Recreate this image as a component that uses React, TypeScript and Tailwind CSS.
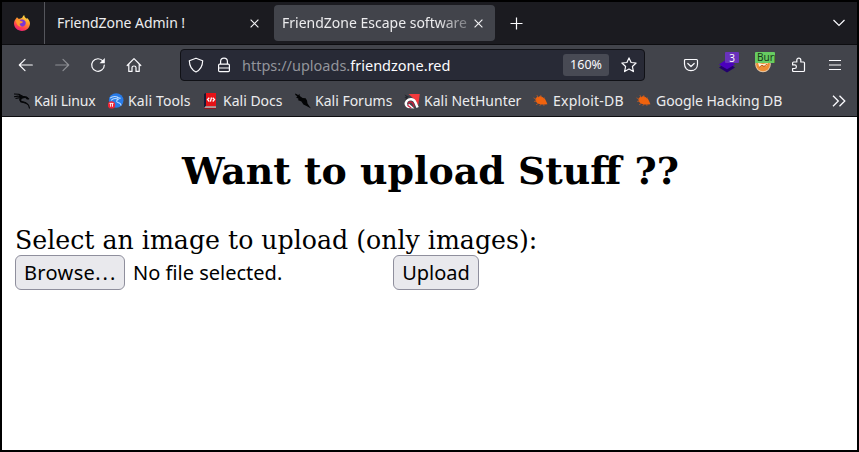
import type { ReactNode } from "react";

function Firefox() {
  return (
    <svg width="16" height="16" viewBox="0 0 16 16" className="shrink-0">
      <defs>
        <linearGradient id="fox" x1="0.8" y1="0" x2="0.3" y2="1">
          <stop offset="0" stopColor="#fff04a" />
          <stop offset="0.4" stopColor="#ff9a2b" />
          <stop offset="0.75" stopColor="#ff4050" />
          <stop offset="1" stopColor="#e3207c" />
        </linearGradient>
      </defs>
      <path fill="url(#fox)" d="M3 2.2L4.4 3.8L6 3.7L8.2 2.8C8.5 1.5 9.3.6 10.2 0C10.3 1.8 11.5 2.7 12.5 3.7L13 2.9C14.6 4 16 6.2 16 8.8C15.6 13 12.3 16 8 16C3.6 16 .1 12.7 0 8.6C0 6.7.7 5.1 1.7 4Z" />
      <path fill="#7a36d8" d="M5.2 5.3C7 4 10 4.2 11.3 6.2C12.6 8.6 10.9 11.4 8.2 11.5C6 11.5 4.6 9.8 4.8 8.2L7.4 8.2L9 6.9L6.7 6.5Z" />
      <path fill="#ff9a2b" d="M1.7 5.2L5.2 5L7.2 6.2L9 6.7L7.4 8.1L5.8 8.5C5.4 9.6 6.2 10.8 7.8 11.4C4 12.3 2.5 9 1.7 5.2Z" />
    </svg>
  );
}

function Icon({ size = 16, className = "", children }: { size?: number; className?: string; children: ReactNode }) {
  return (
    <svg width={size} height={size} viewBox={`0 0 ${size} ${size}`} fill="none" stroke="#fbfbfe" strokeWidth="1.2" strokeLinecap="round" strokeLinejoin="round" className={`shrink-0 ${className}`}>
      {children}
    </svg>
  );
}

function Close() {
  return (
    <svg width="9" height="9" viewBox="0 0 9 9" stroke="#f2f2f4" strokeWidth="1.15" className="shrink-0">
      <path d="M.6 .6L8.4 8.4M8.4 .6L.6 8.4" />
    </svg>
  );
}

function KaliDragon() {
  return (
    <svg width="17" height="16" viewBox="0 0 17 16" className="shrink-0">
      <path fill="none" stroke="#050608" strokeWidth="1.1" d="M0 1L5 1.2L8.5 3.2L12.5 4.2L15 6.2M0 3.8L4 3.1L7.5 4.3M1.5 5.5L6 4.6L8.2 5.2M7.5 4L6 6.3L6.8 8.6L11.5 9.8L14.5 12L15.6 15.5M12 4.4L13.5 6.5" />
      <path fill="#050608" d="M4 1L9 3.1L13 3.8L15 6L11 5L7.5 5.8L7.3 8L11.5 9L14.2 11.3L11 10.6L6.4 9.2L5.2 7L6.5 4.3Z" />
    </svg>
  );
}

function KaliTools() {
  return (
    <svg width="16" height="16" viewBox="0 0 16 16" className="shrink-0">
      <circle cx="8.2" cy="7.5" r="7.3" fill="#287be8" />
      <path fill="none" stroke="#b9dcff" strokeWidth="1.1" d="M2 5.2C5 2.6 9 3.2 11.3 5.4M3 7.3C5.5 5 8 5 10.2 6.6C8 7.3 8.2 9.4 10.5 9.8C12 10.2 13 11 13 12.6M9 4.6L12.7 5.3" />
      <circle cx="3.5" cy="11.9" r="3.7" fill="#ed2537" />
      <path d="M1.5 10.4H5.5M2.6 10.5V13.7M4.5 10.5V13.7" stroke="#fff" strokeWidth=".9" />
    </svg>
  );
}

function KaliDocs() {
  return (
    <svg width="13" height="16" viewBox="0 0 13 16" className="shrink-0">
      <path fill="#e41217" d="M2 0H12V13.2H2Z" />
      <path fill="#161a36" d="M0 1L2 0V13.2L0 15Z" />
      <path fill="#efe0dc" d="M1.3 13.6H12V14.8H.3Z" />
      <path fill="#a00c14" d="M.3 14.8H12V15.8H.3Z" />
      <path fill="none" stroke="#fff" strokeWidth="1.3" d="M5.3 4.7L3.5 6.6L5.3 8.5M8.7 4.7L10.5 6.6L8.7 8.5M7.5 4.5L6.4 8.7" />
    </svg>
  );
}

function KaliForums() {
  return (
    <svg width="16" height="16" viewBox="0 0 16 16" className="shrink-0">
      <path fill="#030405" d="M0 .6L2 1.3L3.2 2.3L4.4 .8L4.8 3L7.6 5L10.6 5.2L12 7.6L12.5 10.6L16 15.6L11.5 13L8.4 11.4L6.4 8.6L2.8 7L3.8 6L1 4.2L2.4 3.5L.4 2Z" />
    </svg>
  );
}

function NetHunter() {
  return (
    <svg width="16" height="16" viewBox="0 0 16 16" className="shrink-0">
      <path fill="#f43a3d" d="M4.5 1H15.8L14.2 12.5L10 6Z" />
      <path fill="#24272e" d="M.5 1.5L5.4 4L3 4.6L5.8 5.6L1 8L2 5.5L.3 4.4L2 4Z" />
      <path fill="none" stroke="#fff" strokeWidth="2.5" strokeLinejoin="round" d="M13.6 14.4L11.4 9.6C10 5.8 5.4 5.2 2.8 8C.9 10.5 1.9 13.4 4.6 14" />
      <path fill="none" stroke="#c21f3c" strokeWidth="1.5" d="M9.9 13.6L9.3 11C8.3 8.6 5.2 8.4 4.2 10.6" />
      <path fill="none" stroke="#fff" strokeWidth="1.4" d="M4.6 11.4L8.4 14.6L4 14.4" />
      <path fill="none" stroke="#db2544" strokeWidth="1.2" d="M3.4 12.2L7.2 15" />
    </svg>
  );
}

function ExploitBug() {
  return (
    <svg width="15" height="15" viewBox="0 0 15 15" className="shrink-0">
      <path fill="#f0630e" d="M2.4 6.2L4.2 3.6L5.6 4.1L7 3L9.8 4.2L12 6L13.4 8.8L14.4 11.2L11.6 11.4L8 11.5L4.6 10.5L2.8 8.6Z" />
      <path fill="none" stroke="#c95a20" strokeWidth=".7" d="M.5 4.8L3.5 6.5M1 8.4L3.8 8.2M3.8 2L5.5 5M7.6 2L8.5 4.5M12 4.6L10.5 6M3 11.8L6 10.2M6.6 13L8 11M11 13L10.6 11" />
    </svg>
  );
}

function Bookmark({ icon, label, box, spacing }: { icon: ReactNode; label: string; box: string; spacing: string }) {
  return (
    <div className={`flex shrink-0 items-center ${box}`}>
      <span className="flex w-[20px] shrink-0 items-center">{icon}</span>
      <span className={`whitespace-nowrap ${spacing}`}>{label}</span>
    </div>
  );
}

const bookmarks = [
  { icon: <KaliDragon />, label: "Kali Linux", box: "w-[94px]", spacing: "tracking-[-0.15px]" },
  { icon: <KaliTools />, label: "Kali Tools", box: "w-[96px]", spacing: "tracking-[0.12px]" },
  { icon: <KaliDocs />, label: "Kali Docs", box: "w-[91px]", spacing: "-ml-px" },
  { icon: <KaliForums />, label: "Kali Forums", box: "w-[109px]", spacing: "tracking-[0px]" },
  { icon: <NetHunter />, label: "Kali NetHunter", box: "w-[129px]", spacing: "tracking-[0px]" },
  { icon: <ExploitBug />, label: "Exploit-DB", box: "w-[103px]", spacing: "tracking-[0.25px]" },
  { icon: <ExploitBug />, label: "Google Hacking DB", box: "w-[150px]", spacing: "tracking-[-0.05px]" },
];

function TabBar() {
  return (
    <div className="flex h-[43px] items-center border-b border-[#0d0d10] bg-[#1b1b20] pl-[12px] pr-[12px]">
      <Firefox />
      <div className="ml-[14px] h-[42px] w-px bg-[#55565c]" />
      <div className="ml-[12px] flex w-[202px] items-center justify-between">
        <span className="whitespace-nowrap tracking-[-0.04px]">FriendZone Admin !</span>
        <Close />
      </div>
      <div className="ml-[15px] flex h-9 w-[221px] items-center rounded-[4px] bg-[#42444b] pl-[8px]">
        <span className="w-[187px] overflow-hidden whitespace-nowrap [mask-image:linear-gradient(to_right,#000_83%,transparent_107%)]">FriendZone Escape software</span>
        <span className="ml-[5px] flex"><Close /></span>
      </div>
      <svg width="13" height="13" viewBox="0 0 13 13" stroke="#fbfbfe" strokeWidth="1.2" className="ml-[15px]">
        <path d="M6.5 .5V12.5M.5 6.5H12.5" />
      </svg>
      <svg width="12" height="8" viewBox="0 0 12 8" fill="none" stroke="#fbfbfe" strokeWidth="1.2" className="ml-auto">
        <path d="M.5 1L6 6.5L11.5 1" />
      </svg>
    </div>
  );
}

function NavBar() {
  return (
    <div className="flex h-10 items-center pr-[13px] pl-[16px]">
      <Icon><path d="M14.3 8H1.3M7 2.3L1.3 8L7 13.7" /></Icon>
      <Icon className="ml-[20px] opacity-40"><path d="M1.7 8H14.5M9 2.3L14.7 8L9 13.7" /></Icon>
      <Icon className="ml-[20px]">
        <path d="M13 4.2A6.3 6.3 0 1 0 14.3 8" />
        <path fill="#fbfbfe" stroke="none" d="M14.8 1V6.2H9.6Z" />
      </Icon>
      <Icon className="ml-[20px]"><path d="M1.2 8.5L8 1.7L14.8 8.5M2.8 7V14.4H6V10.5Q6 9 8 9Q10 9 10 10.5V14.4H13.2V7" /></Icon>
      <div className="ml-[38px] flex h-8 w-[465px] items-center rounded-[4px] border border-[#101116] bg-[#282a36] pr-[7px] pl-[7px] text-[#fbfbfe]">
        <Icon><path d="M8 1.2L14.7 3.8C14.5 9 13 12.7 8 15C3 12.7 1.5 9 1.3 3.8Z" /></Icon>
        <Icon className="ml-[12px]"><path d="M4.6 7V4.5A3.4 3.4 0 0 1 11.4 4.5V7M3.7 7.2H12.3Q13.4 7.2 13.4 8.3V13.5Q13.4 14.7 12.3 14.7H3.7Q2.6 14.7 2.6 13.5V8.3Q2.6 7.2 3.7 7.2ZM2.6 11H13.4" /></Icon>
        <span className="ml-[10px] whitespace-nowrap text-[14.5px]"><span className="text-[#93949b]">https://uploads.</span>friendzone.red</span>
        <span className="ml-auto flex h-[22px] w-[46px] items-center justify-center rounded-[3px] bg-[#484a54] text-[12.5px]">160%</span>
        <Icon className="ml-[12px]"><path d="M8 .9L10.1 5.5L15.1 6L11.4 9.5L12.4 14.6L8 12.1L3.6 14.6L4.6 9.5L.9 6L5.9 5.5Z" /></Icon>
      </div>
      <Icon className="ml-[38px]"><path d="M2.5 2.5H13.5Q14.5 2.5 14.5 3.5V7C14.5 11 11.8 13.6 8 13.6S1.5 11 1.5 7V3.5Q1.5 2.5 2.5 2.5ZM4.8 6.5L8 9.5L11.2 6.5" /></Icon>
      <div className="relative ml-[20px] h-5 w-4 shrink-0">
        <svg width="16" height="20" viewBox="0 0 16 20">
          <path fill="#23006d" d="M0 12.5L8 7L16 12.5L8 17.5Z" />
          <path fill="#4b00bd" d="M0 9.5L8 4L16 9.5L8 14.2Z" />
        </svg>
        <span className="absolute top-[-3px] left-[6px] flex h-[11px] w-[14px] items-center justify-center rounded-[1px] bg-[#6932bb] text-[10px] leading-none text-white">3</span>
      </div>
      <div className="relative ml-[20px] h-5 w-4 shrink-0">
        <svg width="16" height="20" viewBox="0 0 16 20">
          <circle cx="8" cy="9.4" r="7.8" fill="#e7c8a5" />
          <circle cx="8" cy="9.4" r="6.8" fill="#ee8d33" />
          <path d="M3 8L8 9L13 8L11 11L7 10.8L4.5 12.5Z" fill="#fff1d9" />
          <path d="M4 12.5L7 10.2L9 11.5L12 9" fill="none" stroke="#bd5b20" strokeWidth="1" />
        </svg>
        <span className="absolute top-[-3px] left-0 h-[11px] w-5 overflow-hidden rounded-[1px] bg-[#67cc62] pl-[2px] text-[10px] leading-[11px] text-[#183817]">Burp</span>
      </div>
      <Icon className="ml-[20px]"><path d="M2.6 14.5Q1.6 14.5 1.6 13.5V11.5H3.6A1.8 1.8 0 0 0 3.6 7.9H1.6V6Q1.6 5 2.6 5H5.8V3.2A2 2 0 0 1 9.8 3.2V5H12.5Q13.5 5 13.5 6V13.5Q13.5 14.5 12.5 14.5Z" /></Icon>
      <Icon className="ml-[20px]"><path strokeLinecap="butt" d="M2 3.5H14M2 8H14M2 12.5H14" /></Icon>
    </div>
  );
}

export default function App() {
  return (
    <main className="flex h-[452px] w-[859px] flex-col overflow-hidden border-2 border-black bg-white font-['Noto_Sans',sans-serif] text-[14px] leading-5 text-[#ececee]">
      <TabBar />
      <div className="h-[72px] border-b border-[#0d0d10] bg-[#42444b]">
        <NavBar />
        <div className="flex h-[31px] items-center pr-[11px] pl-[12px]">
          {bookmarks.map((item) => <Bookmark key={item.label} {...item} />)}
          <svg width="14" height="12" viewBox="0 0 14 12" fill="none" stroke="#fbfbfe" strokeWidth="1.3" className="ml-auto">
            <path d="M1 .7L6.3 6L1 11.3M7.5 .7L12.8 6L7.5 11.3" />
          </svg>
        </div>
      </div>
      <section className="flex-1 px-[13px] pt-[31px] font-['DejaVu_Serif',serif] text-black">
        <h1 className="pl-[2px] text-center text-[37.9px] leading-[45px] font-bold">Want to upload Stuff ??</h1>
        <p className="mt-[33px] -mb-px text-[25.24px] leading-[30px]">Select an image to upload (only images):</p>
        <div className="flex items-center font-['Noto_Sans',sans-serif] text-[20px] leading-none">
          <button className="h-[35px] w-[110px] rounded-[6px] border border-[#8f8f9d] bg-[#e9e9ed] pl-[8px] text-left tracking-[0.35px] whitespace-nowrap">Browse<span className="tracking-[2px]">...</span></button>
          <span className="ml-[8px] w-[260px] whitespace-nowrap">No file selected.</span>
          <button className="h-[35px] w-[86px] rounded-[6px] border border-[#8f8f9d] bg-[#e9e9ed]">Upload</button>
        </div>
      </section>
    </main>
  );
}
